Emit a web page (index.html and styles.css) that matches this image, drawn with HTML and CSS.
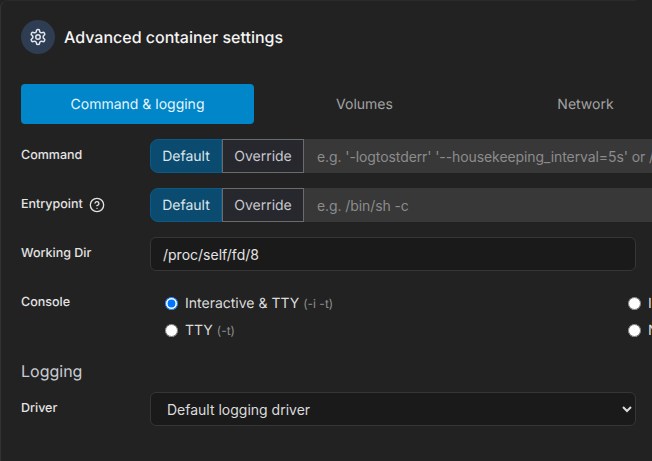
FILE: index.html
```html
<!DOCTYPE html>
<html lang="en">
<head>
    <meta charset="UTF-8">
    <meta name="viewport" content="width=device-width, initial-scale=1.0">
    <title>Advanced container settings</title>
    <link rel="stylesheet" href="styles.css">
</head>
<body>

<div class="card">
    <div class="card-header">
        <span class="icon-circle">
            <svg width="18" height="18" viewBox="0 0 24 24" fill="none" stroke="currentColor" stroke-width="2" stroke-linecap="round" stroke-linejoin="round">
                <path d="M12.22 2h-.44a2 2 0 0 0-2 2v.18a2 2 0 0 1-1 1.73l-.43.25a2 2 0 0 1-2 0l-.15-.08a2 2 0 0 0-2.73.73l-.22.38a2 2 0 0 0 .73 2.73l.15.1a2 2 0 0 1 1 1.72v.51a2 2 0 0 1-1 1.74l-.15.09a2 2 0 0 0-.73 2.73l.22.38a2 2 0 0 0 2.73.73l.15-.08a2 2 0 0 1 2 0l.43.25a2 2 0 0 1 1 1.73V20a2 2 0 0 0 2 2h.44a2 2 0 0 0 2-2v-.18a2 2 0 0 1 1-1.73l.43-.25a2 2 0 0 1 2 0l.15.08a2 2 0 0 0 2.73-.73l.22-.39a2 2 0 0 0-.73-2.73l-.15-.08a2 2 0 0 1-1-1.74v-.5a2 2 0 0 1 1-1.74l.15-.09a2 2 0 0 0 .73-2.73l-.22-.38a2 2 0 0 0-2.73-.73l-.15.08a2 2 0 0 1-2 0l-.43-.25a2 2 0 0 1-1-1.73V4a2 2 0 0 0-2-2z"/>
                <circle cx="12" cy="12" r="3"/>
            </svg>
        </span>
        <h1>Advanced container settings</h1>
    </div>

    <div class="tabs">
        <div class="tab active">Command &amp; logging</div>
        <div class="tab">Volumes</div>
        <div class="tab">Network</div>
    </div>

    <div class="form-row">
        <label class="form-label">Command</label>
        <div class="input-group">
            <span class="toggle toggle-on">Default</span>
            <span class="toggle toggle-off">Override</span>
            <input class="override-input" type="text" disabled placeholder="e.g. '-logtostderr' '--housekeeping_interval=5s' or /usr/local/bin/cadvisor -logtostderr">
        </div>
    </div>

    <div class="form-row">
        <label class="form-label">Entrypoint
            <svg class="help" width="16" height="16" viewBox="0 0 24 24" fill="none" stroke="currentColor" stroke-width="2" stroke-linecap="round" stroke-linejoin="round">
                <circle cx="12" cy="12" r="10"/>
                <path d="M9.09 9a3 3 0 0 1 5.83 1c0 2-3 3-3 3"/>
                <path d="M12 17h.01"/>
            </svg>
        </label>
        <div class="input-group">
            <span class="toggle toggle-on">Default</span>
            <span class="toggle toggle-off">Override</span>
            <input class="override-input" type="text" disabled placeholder="e.g. /bin/sh -c">
        </div>
    </div>

    <div class="form-row">
        <label class="form-label">Working Dir</label>
        <input class="text-input" type="text" value="/proc/self/fd/8">
    </div>

    <div class="form-row console-row">
        <label class="form-label">Console</label>
        <div class="radio-grid">
            <label class="radio"><input type="radio" name="console" checked><span>Interactive &amp; TTY <small>(-i -t)</small></span></label>
            <label class="radio"><input type="radio" name="console"><span>Interactive <small>(-i)</small></span></label>
            <label class="radio"><input type="radio" name="console"><span>TTY <small>(-t)</small></span></label>
            <label class="radio"><input type="radio" name="console"><span>None</span></label>
        </div>
    </div>

    <h2>Logging</h2>

    <div class="form-row">
        <label class="form-label">Driver</label>
        <select class="text-input select-input">
            <option>Default logging driver</option>
        </select>
    </div>
</div>

</body>
</html>
```

FILE: styles.css
```css
html, body {
    height: 100%;
}
body {
    font-family: Inter, "Liberation Sans", sans-serif;
    background-color: #222222;
    margin: 0;
    overflow: hidden;
    color: #f2f2f2;
    text-rendering: geometricPrecision;
}
.card {
    width: 636px;
    min-height: 100%;
    box-sizing: border-box;
    padding: 20px 0 0 20px;
    border-left: 1px solid #333333;
    border-top: 1px solid #2a2a2a;
    border-top-left-radius: 8px;
}
.card-header {
    display: flex;
    align-items: center;
    gap: 9px;
    margin-top: -1px;
}
.icon-circle {
    width: 34px;
    height: 34px;
    border-radius: 50%;
    background-color: #2f3d52;
    color: #dfe6f0;
    display: flex;
    align-items: center;
    justify-content: center;
}
h1 {
    font-size: 16px;
    font-weight: 500;
    margin: 0;
    color: #f5f5f5;
}
.tabs {
    display: grid;
    grid-template-columns: 233px 221px 221px;
    margin-top: 30px;
    width: 676px;
}
.tab {
    height: 40px;
    line-height: 41px;
    text-align: center;
    font-size: 14px;
    color: #a3a3a3;
    border-radius: 4px;
}
.tab.active {
    background-color: #0086c9;
    color: #e6f4fb;
}
.form-row {
    display: flex;
    align-items: flex-start;
    margin-top: 15px;
}
.form-label {
    width: 129px;
    flex: none;
    font-size: 12.5px;
    font-weight: 500;
    line-height: 33px;
    color: #e4e4e4;
    display: flex;
    align-items: center;
    gap: 6px;
}
.input-group {
    display: flex;
    flex: none;
    height: 34px;
    width: 700px;
    font-size: 14px;
}
.toggle {
    box-sizing: border-box;
    height: 34px;
    line-height: 33px;
    text-align: center;
    border: 1px solid #6b6b6b;
}
.toggle-on {
    width: 72px;
    background-color: #0b4b70;
    border-color: #0b5a87;
    color: #dbe4ea;
    border-radius: 8px 0 0 8px;
}
.toggle-off {
    width: 82px;
    background-color: #27272e;
    color: #c9c9ce;
}
.override-input {
    flex: 1;
    height: 34px;
    box-sizing: border-box;
    border: 0;
    padding: 0 13px;
    background-color: #383838;
    font: inherit;
    letter-spacing: -0.09px;
    color: #8c8c8c;
}
.override-input::placeholder {
    color: #8c8c8c;
    opacity: 1;
}
.text-input {
    flex: 1;
    height: 34px;
    box-sizing: border-box;
    min-width: 0;
    border: 1px solid #363636;
    border-radius: 6px;
    padding: 0 12px;
    background-color: #1a1a1a;
    font-family: inherit;
    font-size: 14px;
    color: #e4e4e4;
}
.select-input {
    padding-left: 12px;
    color: #dcdcdc;
}
.radio-grid {
    display: grid;
    grid-template-columns: 463px 200px;
    row-gap: 9px;
    padding: 8px 0 0 15px;
    flex: none;
}
.radio {
    display: flex;
    align-items: center;
    gap: 7px;
    height: 18px;
    font-size: 14px;
    color: #dcdcdc;
    white-space: nowrap;
}
.radio input {
    margin: 0;
    width: 13px;
    height: 13px;
}
.radio small {
    font-size: 12px;
    color: #8f8f8f;
}
h2 {
    font-size: 16px;
    font-weight: 400;
    margin: 22px 0 0;
    line-height: 20px;
    color: #c9ccd3;
}
h2 + .form-row {
    margin-top: 11px;
}
```
